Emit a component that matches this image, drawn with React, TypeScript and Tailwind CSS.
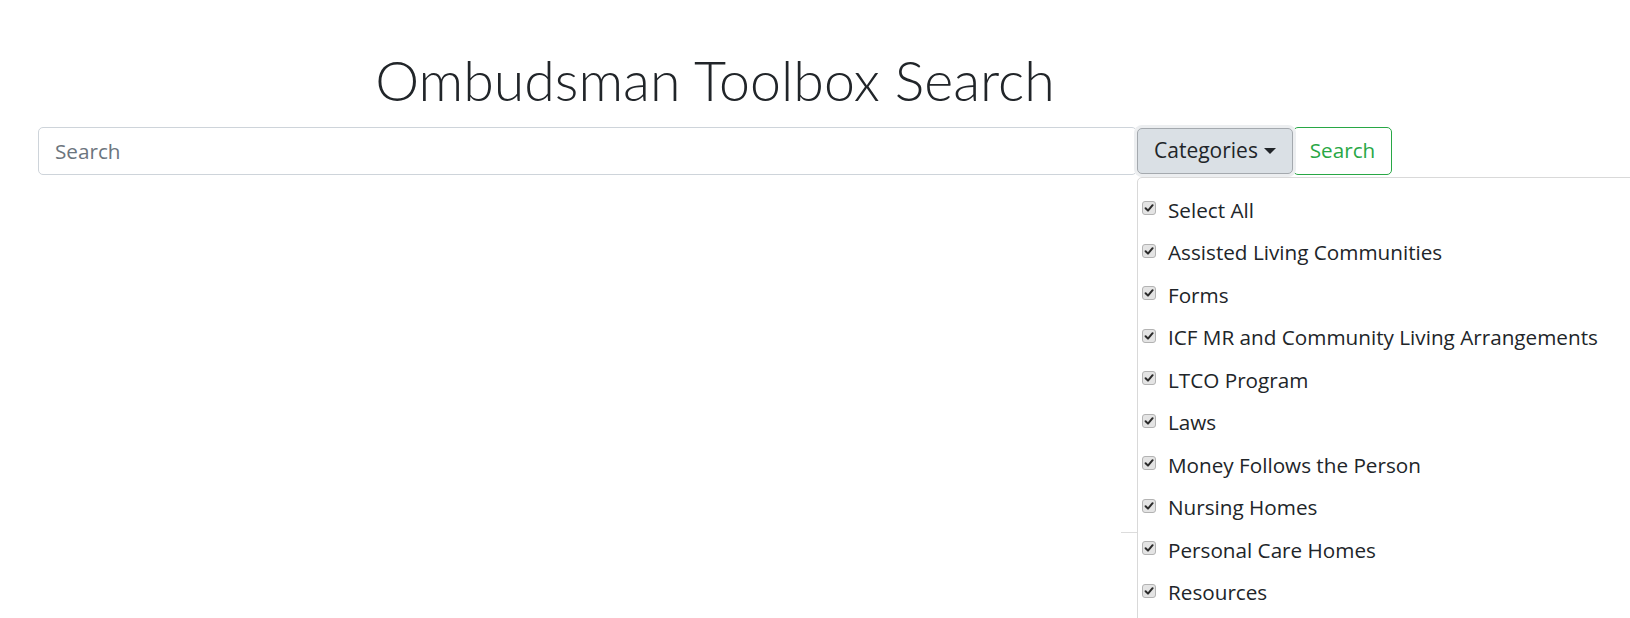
import React from "react";

const items = [
  "Select All",
  "Assisted Living Communities",
  "Forms",
  "ICF MR and Community Living Arrangements",
  "LTCO Program",
  "Laws",
  "Money Follows the Person",
  "Nursing Homes",
  "Personal Care Homes",
  "Resources",
];

function Check() {
  return (
    <span className="flex h-[14px] w-[14px] shrink-0 items-center justify-center rounded-[3px] border border-[#b3b3b3] bg-[#e4e4e4] mb-[4px]">
      <svg width="10" height="10" viewBox="0 0 10 10">
        <path d="M1.6 5.2 L4 7.6 L8.6 2.2" fill="none" stroke="#2b2b2b" strokeWidth="2" strokeLinecap="round" strokeLinejoin="round" />
      </svg>
    </span>
  );
}

export default function App() {
  return (
    <div
      className="relative h-[618px] w-[1630px] overflow-hidden bg-white text-[#212529]"
      style={{ fontFamily: '"Open Sans", "Noto Sans", sans-serif' }}
    >
      <div className="ml-[38px] w-[1354px] pt-[44px]">
        <h1
          className="text-center text-[55.5px] font-light leading-[72px] text-[#212529]"
          style={{ fontFamily: 'Lato, "Open Sans", sans-serif' }}
        >
          Ombudsman Toolbox Search
        </h1>
        <div className="mt-[11px] flex items-center">
          <input
            className="h-[48px] flex-1 rounded-[5px] border border-[#ced4da] px-[16px] text-[20.7px] text-[#495057] placeholder:text-[#6c757d] outline-none"
            placeholder="Search"
          />
          <div className="relative">
            <button className="flex h-[46px] w-[156px] items-center rounded-[5px] border border-[#a4a9ae] bg-[#dae0e5] pl-[16px] text-[21px] text-[#212529] shadow-[0_0_0_3px_#eceef0]">
              <span>Categories</span>
              <span className="ml-[6px] h-0 w-0 border-x-[6px] border-t-[6px] border-x-transparent border-t-[#212529]" />
            </button>
            <div className="absolute left-0 top-[49px] w-[520px] rounded-tl-[5px] border border-[#d9d9d9] bg-white pb-[40px] pl-[4px] pt-[11px]">
              {items.map((t) => (
                <div key={t} className="flex h-[42.5px] items-center gap-[12px]">
                  <Check />
                  <span className="whitespace-nowrap text-[20.7px] leading-none text-[#212529]">{t}</span>
                </div>
              ))}
            </div>
          </div>
          <button className="h-[48px] w-[99px] rounded-[5px] border border-[#28a745] bg-white text-[20.7px] text-[#28a745]">
            Search
          </button>
        </div>
      </div>
      <div className="ml-[1121px] mt-[357px] h-0 border-t border-[#dcdcdc]" />
    </div>
  );
}
